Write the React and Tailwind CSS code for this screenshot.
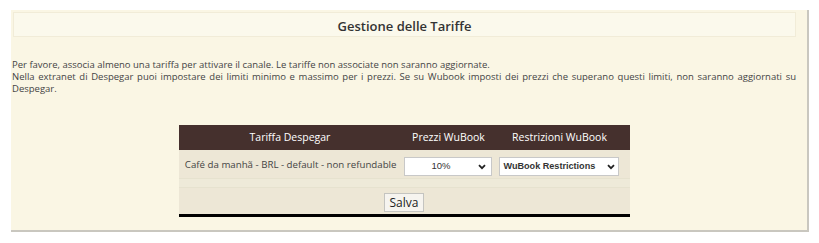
import React from "react";

const Chevron = () => (
  <svg width="8" height="6" viewBox="0 0 8 6" className="shrink-0">
    <path d="M1 1.2 L4 4.2 L7 1.2" fill="none" stroke="#222" strokeWidth="1.8" />
  </svg>
);

export default function App() {
  return (
    <div className="w-[819px] h-[243px] bg-white pt-[10px] pl-[11px]" style={{ fontFamily: '"Open Sans", sans-serif' }}>
      <div className="w-[798px] h-[222px] bg-[#faf6e4] border-r-2 border-b-2 border-[#c9c7bf] pl-[1px] pt-[2px]">
        <div className="w-[784px]">
          <div className="ml-[1px] h-[25px] bg-[#fbf9ec] border border-[#f1ecd8] flex items-center justify-center pt-[4px] text-[13px] font-semibold text-[#333]">
            Gestione delle Tariffe
          </div>

          <div className="mt-[22px] text-[9.5px] leading-[12px] text-[#444] text-justify">
            <p>Per favore, associa almeno una tariffa per attivare il canale. Le tariffe non associate non saranno aggiornate.</p>
            <p>Nella extranet di Despegar puoi impostare dei limiti minimo e massimo per i prezzi. Se su Wubook imposti dei prezzi che superano questi limiti, non saranno aggiornati su Despegar.</p>
          </div>

          <div className="mt-[30px] w-[451px] mx-auto border-b-[3px] border-black">
            <div className="flex h-[25px] bg-[#45302d] text-white text-[10.5px] items-center">
              <div className="w-[223px] text-center">Tariffa Despegar</div>
              <div className="w-[94px] text-center">Prezzi WuBook</div>
              <div className="flex-1 text-center pr-[6px]">Restrizioni WuBook</div>
            </div>
            <div className="flex h-[28px] bg-[#ede7d6] items-start text-[9.7px] text-[#444]">
              <div className="w-[223px] text-right pr-[5px] pt-[8px] leading-[14px]">Café da manhã - BRL - default - non refundable</div>
              <div className="w-[94px] pl-[2px] pt-[7px]">
                <div className="w-[88px] h-[19px] bg-white border border-[#c8c8c8] flex items-center pl-[6px] pr-[5px] text-[9.5px] text-[#333]" style={{ fontFamily: '"Liberation Sans", Arial, sans-serif' }}>
                  <span className="flex-1 text-center pr-[6px]">10%</span>
                  <Chevron />
                </div>
              </div>
              <div className="flex-1 pl-[3px] pt-[7px]">
                <div className="w-[120px] h-[19px] bg-white border border-[#c8c8c8] flex items-center pl-[4px] pr-[3px] text-[9.1px] font-bold text-[#333] whitespace-nowrap" style={{ fontFamily: '"Liberation Sans", Arial, sans-serif' }}>
                  <span className="flex-1">WuBook Restrictions</span>
                  <Chevron />
                </div>
              </div>
            </div>
            <div className="h-[10px] bg-[#eeead9] border-t border-b border-[#e6e2cf]"></div>
            <div className="h-[26px] bg-[#ede7d6] flex items-end justify-center pb-[2px]">
              <button className="h-[19px] px-[5px] bg-[#f6f4ef] border border-[#c4c4c0] text-[12px] text-[#222] leading-none">Salva</button>
            </div>
          </div>
        </div>
      </div>
    </div>
  );
}
